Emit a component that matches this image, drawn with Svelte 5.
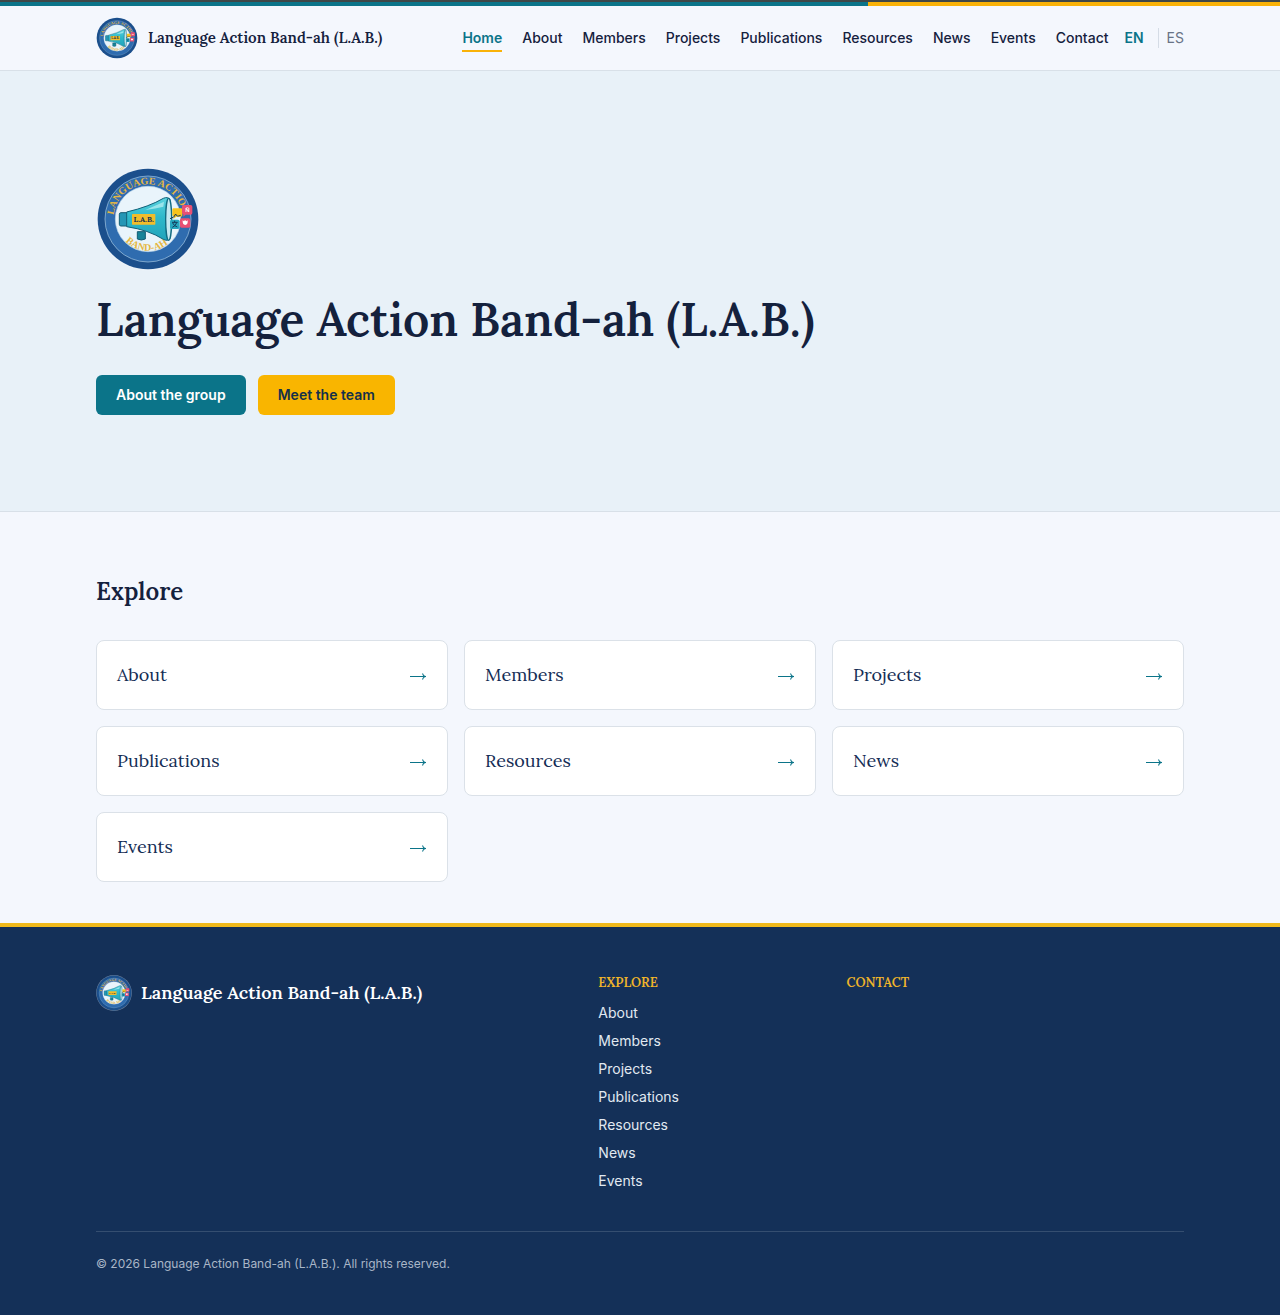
<script lang="ts">
  const siteName = "Language Action Band-ah (L.A.B.)";
  const sections = [
    { label: "About", href: "#about" },
    { label: "Members", href: "#members" },
    { label: "Projects", href: "#projects" },
    { label: "Publications", href: "#publications" },
    { label: "Resources", href: "#resources" },
    { label: "News", href: "#news" },
    { label: "Events", href: "#events" }
  ];
  const navLinks = [
    { label: "Home", href: "#home" },
    ...sections,
    { label: "Contact", href: "#contact" }
  ];
  let current = $state("#home");
  let lang = $state("EN");
</script>

{#snippet logo(id: string)}
  <svg class="logo" viewBox="24 26 312 312" aria-hidden="true">
    <defs>
      <path id="{id}-top" d="M77 196A104 104 0 1 1 283 196" />
      <path id="{id}-bottom" d="M87 202A95 95 0 0 0 273 202" />
      <linearGradient id="{id}-cone" x1="0" y1="0" x2="0" y2="1">
        <stop offset="0" stop-color="#5bd3df" />
        <stop offset="0.45" stop-color="#2fb9cb" />
        <stop offset="1" stop-color="#20a3ba" />
      </linearGradient>
    </defs>
    <circle cx="180" cy="182" r="155" fill="#f1f5fa" opacity=".4" />
    <circle cx="180" cy="182" r="151" fill="#1b4f8c" />
    <circle cx="180" cy="182" r="129" fill="#2f6caf" stroke="#a9cbe6" stroke-width="2" />
    <circle cx="180" cy="182" r="98" fill="#e9f4fb" stroke="#bcd8ec" stroke-width="2" />
    <text class="ring" font-size="30"><textPath href="#{id}-top" startOffset="26">LANGUAGE ACTIO</textPath></text>
    <text class="ring" font-size="30"><textPath href="#{id}-bottom" startOffset="48%" text-anchor="middle">BAND-AH</textPath></text>
    <path d="M148 220h24v22q-12 6-24 0z" fill="#168399" stroke="#135c74" stroke-width="3" />
    <rect x="94" y="163" width="26" height="40" rx="5" fill="#2496b5" stroke="#135c74" stroke-width="3" />
    <path d="M116 161Q184 145 226 120Q240 114 246 124V240Q240 250 226 243Q182 215 116 205Z" fill="url(#{id}-cone)" stroke="#125f78" stroke-width="3" />
    <ellipse cx="242" cy="183" rx="9" ry="63" fill="#c5e9f1" stroke="#126c83" stroke-width="4" />
    <path d="M172 155L228 130L226 145Q204 150 172 155Z" fill="#b4eef2" opacity=".75" />
    <rect x="132" y="167" width="70" height="32" rx="2" fill="#f2bd2a" />
    <text x="167" y="191" class="label">L.A.B.</text>
    <path d="M257 150h22q4 0 4 4v17q0 4-4 4h-14l-9 7 2-8q-5 0-5-5v-15q0-4 4-4z" fill="#f8c31c" />
    <path d="M246 181q14-3 17-14q3 10 15 4" fill="none" stroke="#163654" stroke-width="3" />
    <path d="M287 140h21q5 0 5 5v19q0 5-5 5h-15l-7 6v-7q-4-1-4-5v-18q0-5 5-5z" fill="#e95073" />
    <text x="298" y="161" class="bubble">Ñ</text>
    <rect x="246" y="184" width="29" height="28" rx="5" fill="#27a7bf" />
    <path d="M252 192h17M260 187v5M266 193q-3 10-13 14M254 194q4 9 14 12" fill="none" stroke="#143b5b" stroke-width="3" />
    <rect x="276" y="180" width="31" height="28" rx="5" fill="#e95073" />
    <path d="M284 186v5q0 8 7 9q8-1 8-9v-5l-4 3-4-4-3 4z" fill="#fff" />
  </svg>
{/snippet}

<header class="site-header">
  <div class="container header-row">
    <a class="brand" href="#home">
      {@render logo("header-logo")}
      <span>{siteName}</span>
    </a>
    <div class="header-right">
      <nav aria-label="Main">
        {#each navLinks as link}
          <a href={link.href} class:active={current === link.href} onclick={() => (current = link.href)}>{link.label}</a>
        {/each}
      </nav>
      <div class="lang">
        <button type="button" class:selected={lang === "EN"} onclick={() => (lang = "EN")}>EN</button>
        <button type="button" class:selected={lang === "ES"} onclick={() => (lang = "ES")}>ES</button>
      </div>
    </div>
  </div>
</header>

<main>
  <section class="hero">
    <div class="container">
      {@render logo("hero-logo")}
      <h1>{siteName}</h1>
      <div class="actions">
        <a class="btn primary" href="#about">About the group</a>
        <a class="btn accent" href="#members">Meet the team</a>
      </div>
    </div>
  </section>

  <section class="container explore">
    <h2>Explore</h2>
    <div class="grid">
      {#each sections as item}
        <a class="card" href={item.href}>
          <span>{item.label}</span>
          <svg viewBox="0 0 18 12" aria-hidden="true"><path d="M1 6.5h16M13.5 3.5q.5 2.500 3 3q-2.500 .5-3 3" /></svg>
        </a>
      {/each}
    </div>
  </section>
</main>

<footer>
  <div class="container">
    <div class="footer-grid">
      <div class="footer-brand">
        {@render logo("footer-logo")}
        <span>{siteName}</span>
      </div>
      <div>
        <h3>Explore</h3>
        <ul>
          {#each sections as item}
            <li><a href={item.href}>{item.label}</a></li>
          {/each}
        </ul>
      </div>
      <div>
        <h3>Contact</h3>
      </div>
    </div>
    <p class="copyright">© 2026 {siteName}. All rights reserved.</p>
  </div>
</footer>

<style>
  :global(body) {
    background: #f4f7fd;
    color: #14213d;
    font-family: Inter, "Liberation Sans", sans-serif;
    font-size: 14px;
    line-height: 20px;
  }
  a { color: inherit; text-decoration: none; }
  h1, h2, h3, .brand, .card, .footer-brand { font-family: Lora, "Liberation Serif", serif; }
  .container { max-width: 1088px; margin: 0 auto; padding: 0 24px; }
  .logo { display: block; flex: none; }
  .ring { fill: #e5b743; font-family: "Liberation Serif", serif; font-weight: 700; }
  .label { fill: #173450; font: 700 23px Lora, "Liberation Serif", serif; text-anchor: middle; }
  .bubble { fill: #fff; font: 700 18px "Liberation Sans", sans-serif; text-anchor: middle; }

  .site-header {
    border-top: 2px solid #3f4747;
    border-bottom: 1px solid #d8e0e8;
  }
  .site-header::before {
    content: "";
    display: block;
    height: 4px;
    background: linear-gradient(90deg, #0b7489 0 67.8%, #f9b208 67.8%);
  }
  .header-row { display: flex; align-items: center; justify-content: space-between; min-height: 64px; }
  .brand { display: flex; align-items: center; gap: 10px; font-size: 15px; font-weight: 600; white-space: nowrap; }
  .brand .logo { width: 42px; height: 42px; }
  .header-right { display: flex; align-items: center; gap: 16px; }
  nav { display: flex; gap: 20px; font-weight: 500; }
  nav a { padding: 4px 0 2px; border-bottom: 2px solid transparent; }
  nav a.active { color: #0b7489; font-weight: 600; border-color: #f9b208; }
  .lang { display: flex; }
  .lang button { border: 0; padding: 0; background: none; color: #687386; font: inherit; cursor: pointer; }
  .lang button + button { margin-left: 14px; padding-left: 8px; border-left: 1px solid #d5dce6; }
  .lang button.selected { color: #0b7489; font-weight: 600; }

  .hero { padding: 96px 0; background: #e8f1f8; border-bottom: 1px solid #d8e0e8; }
  .hero .logo { width: 104px; height: 104px; }
  h1 { margin: 20px 0 26px; font-size: 46px; line-height: 58px; font-weight: 600; }
  .actions { display: flex; gap: 12px; }
  .btn { padding: 10px 20px; border-radius: 6px; font-weight: 600; }
  .primary { background: #0b7489; color: #fff; }
  .accent { background: #f9b500; color: #14304a; }

  .explore { padding-top: 64px; padding-bottom: 41px; }
  h2 { margin: 0 0 32px; font-size: 24px; line-height: 32px; font-weight: 600; }
  .grid { display: grid; grid-template-columns: repeat(3, 1fr); gap: 16px; }
  .card {
    display: flex;
    align-items: center;
    justify-content: space-between;
    padding: 20px;
    background: #fff;
    border: 1px solid #dbe1e8;
    border-radius: 8px;
    font-size: 18px;
    line-height: 28px;
    color: #142d55;
  }
  .card svg { width: 18px; height: 12px; margin-top: 2px; fill: none; stroke: #0b7489; stroke-width: 1.2; }

  footer { padding: 48px 0 43px; background: #143058; border-top: 4px solid #efb91b; color: #e1e9f1; }
  .footer-grid { display: grid; grid-template-columns: 2.22fr 1fr 1.62fr; gap: 40px; padding-bottom: 40px; border-bottom: 1px solid #354e70; }
  .footer-brand { display: flex; align-items: center; align-self: start; gap: 9px; font-size: 18px; font-weight: 600; color: #fff; }
  .footer-brand .logo { width: 36px; height: 36px; }
  h3 { margin: 0 0 12px; font-size: 13px; line-height: 16px; font-weight: 600; color: #efb42a; text-transform: uppercase; }
  ul { display: grid; gap: 8px; margin: 0; padding: 0; list-style: none; }
  .copyright { margin: 24px 0 0; font-size: 12px; line-height: 16px; color: #a9b6c7; }

  @media (max-width: 960px) {
    .header-row, nav { flex-wrap: wrap; }
    .header-row { padding-top: 12px; padding-bottom: 12px; gap: 12px; }
    .grid, .footer-grid { grid-template-columns: 1fr; }
  }
</style>
